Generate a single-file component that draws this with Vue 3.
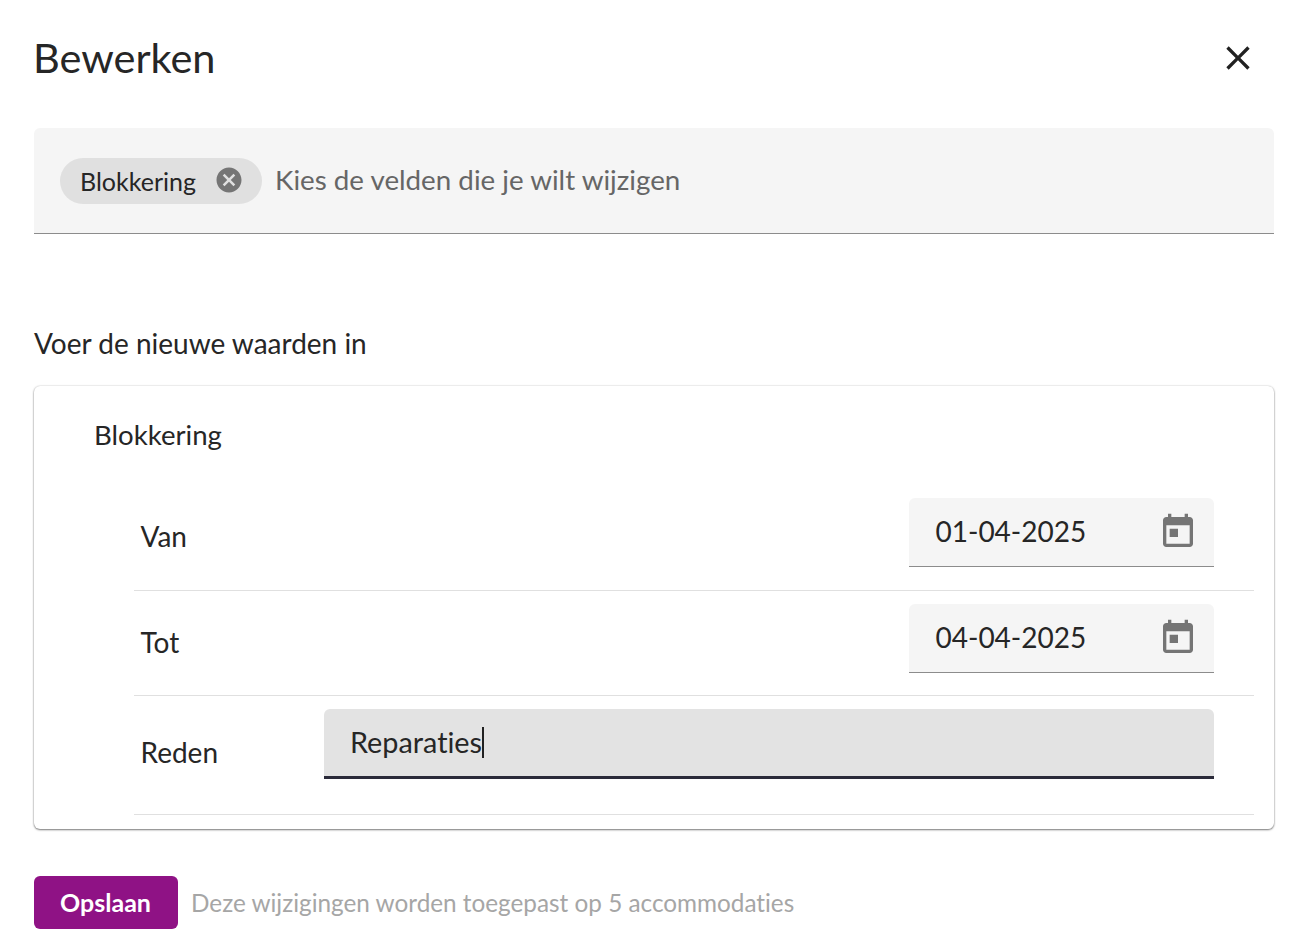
<script setup>
const rows = [
  { label: 'Van', value: '01-04-2025' },
  { label: 'Tot', value: '04-04-2025' }
]
</script>

<template>
  <div class="page">
    <header class="head">
      <h1 class="title">Bewerken</h1>
      <button class="close" aria-label="Sluiten">
        <svg width="40" height="40" viewBox="0 0 24 24"><path d="M19 6.41 17.59 5 12 10.59 6.41 5 5 6.41 10.59 12 5 17.59 6.41 19 12 13.41 17.59 19 19 17.59 13.41 12z" fill="#212121"/></svg>
      </button>
    </header>

    <div class="select">
      <span class="chip">
        <span class="chip-text">Blokkering</span>
        <svg class="chip-x" width="30" height="30" viewBox="0 0 24 24"><path d="M12 2C6.47 2 2 6.47 2 12s4.47 10 10 10 10-4.47 10-10S17.53 2 12 2zm5 13.59L15.59 17 12 13.41 8.41 17 7 15.59 10.59 12 7 8.41 8.41 7 12 10.59 15.59 7 17 8.41 13.41 12 17 15.59z" fill="#757575"/></svg>
      </span>
      <span class="placeholder">Kies de velden die je wilt wijzigen</span>
    </div>

    <p class="subtitle">Voer de nieuwe waarden in</p>

    <section class="card">
      <h2 class="card-title">Blokkering</h2>
      <div v-for="row in rows" :key="row.label" class="row">
        <span class="label">{{ row.label }}</span>
        <div class="date">
          <span class="date-value">{{ row.value }}</span>
          <svg width="40" height="40" viewBox="0 0 24 24"><path d="M19 3h-1V1h-2v2H8V1H6v2H5c-1.11 0-1.99.9-1.99 2L3 19c0 1.1.89 2 2 2h14c1.1 0 2-.9 2-2V5c0-1.1-.9-2-2-2zm0 16H5V8h14v11zM7 10h5v5H7z" fill="#757575"/></svg>
        </div>
      </div>
      <div class="row row-last">
        <span class="label label-reason">Reden</span>
        <div class="text-field"><span class="text-value">Reparaties</span><span class="caret"></span></div>
      </div>
    </section>

    <footer class="foot">
      <button class="save">Opslaan</button>
      <span class="hint">Deze wijzigingen worden toegepast op 5 accommodaties</span>
    </footer>
  </div>
</template>

<style>
html, body { margin: 0; background: #fff; }
</style>

<style scoped>
.page {
  box-sizing: border-box;
  width: 1303px;
  height: 943px;
  padding: 0 29px 0 34px;
  overflow: hidden;
  font-family: "Lato", "Open Sans", sans-serif;
  font-variant-ligatures: none;
  color: #262626;
}
.head {
  display: flex;
  align-items: center;
  justify-content: space-between;
  height: 118px;
  margin-bottom: 10px;
}
.title {
  margin: 0 0 4px -1px;
  font-size: 41.5px;
  font-weight: 400;
  line-height: 100px;
}
.close {
  width: 40px;
  height: 40px;
  padding: 0;
  margin: 0 16px 3px 0;
  border: 0;
  background: none;
  display: flex;
}
.select {
  box-sizing: border-box;
  height: 106px;
  padding: 0 26px;
  display: flex;
  align-items: center;
  background: #f5f5f5;
  border-bottom: 1px solid #8c8c8c;
  border-radius: 6px 6px 0 0;
}
.chip {
  box-sizing: border-box;
  width: 202px;
  height: 46px;
  margin-right: 13px;
  padding: 0 18px 0 20px;
  display: flex;
  align-items: center;
  justify-content: space-between;
  background: #e0e0e0;
  border-radius: 23px;
}
.chip-text { font-size: 25px; }
.chip-x { margin-top: -2px; }
.placeholder { font-size: 27.75px; color: #666; margin-top: -2px; }
.subtitle {
  margin: 92px 0 26px;
  font-size: 28px;
  line-height: 34px;
}
.card {
  box-sizing: border-box;
  height: 443px;
  padding: 0 20px 0 100px;
  border-radius: 6px;
  background: #fff;
  box-shadow: 0 1px 2px rgba(0, 0, 0, 0.5), 0 0 2px rgba(0, 0, 0, 0.18);
}
.card-title {
  margin: 0 0 0 -40px;
  padding-top: 29px;
  height: 100px;
  box-sizing: border-box;
  font-size: 27.6px;
  line-height: 40px;
  font-weight: 400;
}
.row {
  box-sizing: border-box;
  height: 105.2px;
  padding: 12.4px 40px 0 6.5px;
  display: flex;
  justify-content: space-between;
  align-items: flex-start;
  border-bottom: 1px solid #e0e0e0;
}
.label { font-size: 28px; line-height: 40px; margin-top: 18px; }
.date {
  box-sizing: border-box;
  width: 305px;
  height: 69px;
  padding: 0 16px 2px 26.5px;
  display: flex;
  align-items: center;
  justify-content: space-between;
  background: #f5f5f5;
  border-bottom: 1px solid #8c8c8c;
  border-radius: 6px 6px 0 0;
}
.date svg { margin-bottom: -2px; }
.date-value { font-size: 28px; }
.row-last {
  height: 118.6px;
}
.label-reason { margin-top: 23px; }
.text-field {
  box-sizing: border-box;
  width: 890px;
  height: 70px;
  padding: 14px 26px 0;
  display: flex;
  align-items: flex-start;
  background: #e3e3e3;
  border-bottom: 3px solid #2b2b3a;
  border-radius: 6px 6px 0 0;
}
.text-value { font-size: 28.8px; line-height: 38px; }
.caret { width: 1.5px; height: 31px; margin-top: 4px; background: #212121; }
.foot {
  display: flex;
  align-items: center;
  gap: 13px;
  margin-top: 47px;
}
.save {
  width: 144px;
  height: 53px;
  padding: 0 1px 2px 0;
  border: 0;
  border-radius: 6px;
  background: #8f1285;
  color: #fff;
  font-family: inherit;
  font-size: 25px;
  font-weight: 700;
}
.hint { font-size: 24.3px; color: #a6a6a6; }
</style>
